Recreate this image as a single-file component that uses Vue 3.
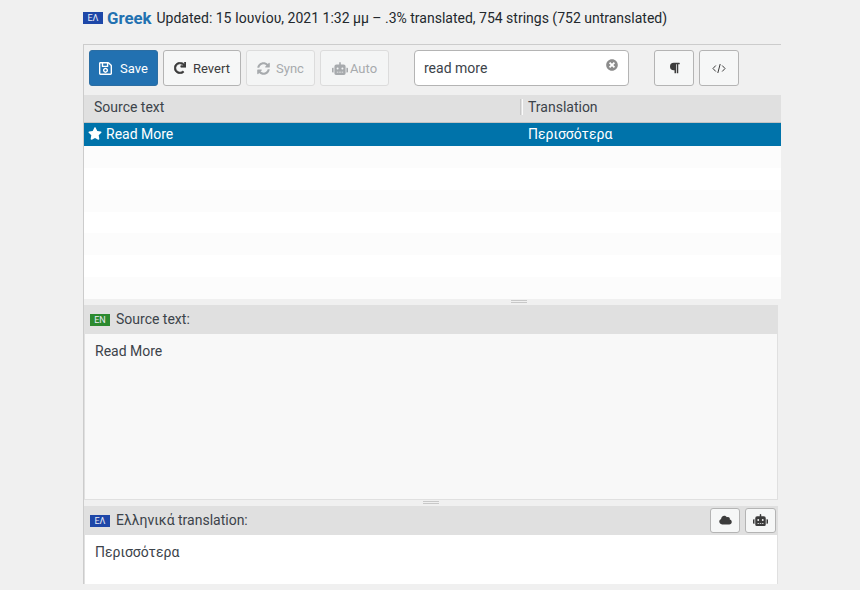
<script setup>
const rows = [0, 1, 2, 3, 4, 5, 6]
</script>

<template>
  <div class="page">
    <div class="title">
      <span class="flag greek">ΕΛ</span>
      <strong class="lang">Greek</strong>
      <span>Updated: 15 Ιουνίου, 2021 1:32 μμ – .3% translated, 754 strings (752 untranslated)</span>
    </div>

    <div class="main">
      <div class="panel">
        <div class="toolbar">
          <button class="btn primary save">
            <svg viewBox="0 0 448 512" width="13" height="15"><path fill="currentColor" d="M433.900 129.900l-83.900-83.900A48 48 0 0 0 316.100 32H48C21.500 32 0 53.500 0 80v352c0 26.500 21.500 48 48 48h352c26.500 0 48-21.500 48-48V163.900a48 48 0 0 0-14.100-34zM272 80v80H144V80h128zm122 352H54a6 6 0 0 1-6-6V86a6 6 0 0 1 6-6h42v104c0 13.300 10.700 24 24 24h176c13.300 0 24-10.700 24-24V83.900l78.200 78.200a6 6 0 0 1 1.800 4.200V426a6 6 0 0 1-6 6zM224 232c-48.500 0-88 39.500-88 88s39.500 88 88 88 88-39.500 88-88-39.500-88-88-88zm0 128c-22.100 0-40-17.900-40-40s17.900-40 40-40 40 17.900 40 40-17.900 40-40 40z"/></svg>
            <span>Save</span>
          </button>
          <button class="btn revert">
            <svg viewBox="0 0 512 512" width="12" height="12"><path fill="currentColor" d="M500.300 0h-47.400a12 12 0 0 0-12 12.600l4 82.800A247.400 247.400 0 0 0 256 8C119.300 8 7.900 119.500 8 256.200 8.100 393.100 119.100 504 256 504a247.100 247.100 0 0 0 166.200-63.900 12 12 0 0 0 .5-17.400l-34-34a12 12 0 0 0-16.400-.6A176 176 0 1 1 402.100 157.800l-101.500-4.900a12 12 0 0 0-12.600 12v47.400a12 12 0 0 0 12 12h200.300a12 12 0 0 0 12-12V12a12 12 0 0 0-12-12z" stroke="currentColor" stroke-width="24"/></svg>
            <span>Revert</span>
          </button>
          <button class="btn muted sync">
            <svg viewBox="0 0 512 512" width="13" height="13"><path fill="currentColor" d="M370.720 133.280C339.458 104.008 298.888 87.962 255.848 88c-77.458.068-144.328 53.178-162.791 126.850-1.344 5.363-6.122 9.150-11.651 9.150H24.103c-7.498 0-13.194-6.807-11.807-14.176C33.933 94.924 134.813 8 256 8c66.448 0 126.791 26.136 171.315 68.685L463.030 40.970C478.149 25.851 504 36.559 504 57.941V192c0 13.255-10.745 24-24 24H345.941c-21.382 0-32.090-25.851-16.971-40.971l41.750-41.749zM32 296h134.059c21.382 0 32.090 25.851 16.971 40.971l-41.750 41.750c31.262 29.273 71.835 45.319 114.876 45.280 77.418-.07 144.315-53.144 162.787-126.849 1.344-5.363 6.122-9.150 11.651-9.150h57.304c7.498 0 13.194 6.807 11.807 14.176C478.067 417.076 377.187 504 256 504c-66.448 0-126.791-26.136-171.315-68.685L48.970 471.030C33.851 486.149 8 475.441 8 454.059V320c0-13.255 10.745-24 24-24z"/></svg>
            <span>Sync</span>
          </button>
          <button class="btn muted auto">
            <svg viewBox="0 0 640 512" width="16" height="13"><path fill="currentColor" d="M32 224h32v192H32a32 32 0 0 1-32-32V256a32 32 0 0 1 32-32zm512-48v272a64 64 0 0 1-64 64H160a64 64 0 0 1-64-64V176a80 80 0 0 1 80-80h112V32a32 32 0 0 1 64 0v64h112a80 80 0 0 1 80 80zM264 256a40 40 0 1 0-40 40 40 40 0 0 0 40-40zm-8 128h-64v32h64zm96 0h-64v32h64zm104-128a40 40 0 1 0-40 40 40 40 0 0 0 40-40zm-8 128h-64v32h64zm192-128v128a32 32 0 0 1-32 32h-32V224h32a32 32 0 0 1 32 32z"/></svg>
            <span>Auto</span>
          </button>
          <div class="search">
            <span>read more</span>
            <svg class="clear" viewBox="0 0 512 512" width="12" height="12"><path fill="#8c8c8c" d="M256 8C119 8 8 119 8 256s111 248 248 248 248-111 248-248S393 8 256 8zm121.600 313.100c4.700 4.700 4.700 12.300 0 17L338 377.600c-4.700 4.700-12.300 4.700-17 0L256 312l-65.100 65.600c-4.700 4.700-12.300 4.700-17 0L134.400 338c-4.700-4.700-4.700-12.300 0-17l65.600-65-65.600-65.100c-4.700-4.700-4.700-12.300 0-17l39.600-39.600c4.700-4.700 12.300-4.700 17 0l65 65.700 65.100-65.600c4.700-4.700 12.300-4.700 17 0l39.600 39.600c4.700 4.700 4.700 12.300 0 17L312 256l65.600 65.100z"/></svg>
          </div>
          <button class="btn square para">
            <svg viewBox="0 0 448 512" width="11" height="12"><path fill="currentColor" d="M448 48v32a16 16 0 0 1-16 16h-48v368a16 16 0 0 1-16 16h-32a16 16 0 0 1-16-16V96h-32v368a16 16 0 0 1-16 16h-32a16 16 0 0 1-16-16V352h-32a160 160 0 0 1 0-320h240a16 16 0 0 1 16 16z"/></svg>
          </button>
          <button class="btn square code">
            <svg viewBox="0 0 14 11" width="14" height="11"><path fill="none" stroke="currentColor" stroke-width="1" d="M3.800 2.500L1 5.500l2.800 3M10.200 2.500L13 5.500l-2.800 3M8.200 1L5.800 10"/></svg>
          </button>
        </div>

        <div class="table-head">
          <div class="col first">Source text</div>
          <div class="grip"></div>
          <div class="col">Translation</div>
        </div>
        <div class="row-selected">
          <div class="cell first">
            <svg viewBox="0 0 576 512" width="14" height="13"><path fill="#fff" d="M259.300 17.800L194 150.200 47.900 171.500c-26.200 3.800-36.700 36.100-17.700 54.600l105.700 103-25 145.500c-4.500 26.300 23.200 46 46.400 33.700L288 439.600l130.700 68.700c23.200 12.200 50.900-7.400 46.400-33.700l-25-145.500 105.700-103c19-18.500 8.500-50.800-17.700-54.600L382 150.200 316.700 17.800c-11.700-23.600-45.600-23.900-57.400 0z"/></svg>
            <span>Read More</span>
          </div>
          <div class="cell second">Περισσότερα</div>
        </div>
        <div class="rows">
          <div v-for="r in rows" :key="r" class="blank" :class="{ odd: r % 2 === 0 }"></div>
        </div>
      </div>

      <div class="splitter top-split"><i></i></div>

      <div class="editor">
        <div class="ed-head">
          <span class="flag en">EN</span>
          <span class="ed-label">Source text:</span>
        </div>
        <div class="ed-body source">Read More</div>
        <div class="splitter inner-split"><i></i></div>
        <div class="ed-head">
          <span class="flag greek">ΕΛ</span>
          <span class="ed-label">Ελληνικά translation:</span>
          <div class="ed-actions">
            <button class="btn tiny">
              <svg viewBox="0 0 640 512" width="13" height="10"><path fill="currentColor" d="M537.600 226.600c4.100-10.700 6.400-22.400 6.400-34.600 0-53-43-96-96-96-19.700 0-38.100 6-53.300 16.200C367 64.200 315.300 32 256 32c-88.400 0-160 71.600-160 160 0 2.700.1 5.400.2 8.100C40.200 219.800 0 273.200 0 336c0 79.500 64.500 144 144 144h368c70.700 0 128-57.300 128-128 0-61.900-44-113.600-102.400-125.400z"/></svg>
            </button>
            <button class="btn tiny wide">
              <svg viewBox="0 0 640 512" width="15" height="12"><path fill="currentColor" d="M32 224h32v192H32a32 32 0 0 1-32-32V256a32 32 0 0 1 32-32zm512-48v272a64 64 0 0 1-64 64H160a64 64 0 0 1-64-64V176a80 80 0 0 1 80-80h112V32a32 32 0 0 1 64 0v64h112a80 80 0 0 1 80 80zM264 256a40 40 0 1 0-40 40 40 40 0 0 0 40-40zm-8 128h-64v32h64zm96 0h-64v32h64zm104-128a40 40 0 1 0-40 40 40 40 0 0 0 40-40zm-8 128h-64v32h64zm192-128v128a32 32 0 0 1-32 32h-32V224h32a32 32 0 0 1 32 32z"/></svg>
            </button>
          </div>
        </div>
        <div class="ed-body target">Περισσότερα</div>
      </div>
    </div>
  </div>
</template>

<style>
html, body { margin: 0; background: #f0f0f0; }
</style>

<style scoped>
.page {
  width: 860px;
  height: 590px;
  overflow: hidden;
  box-sizing: border-box;
  padding: 0 0 0 83px;
  background: #f0f0f0;
  font-family: Roboto, "Noto Sans", sans-serif;
  font-size: 14px;
  color: #3c434a;
}
.title {
  height: 18px;
  margin: 0;
  padding: 9px 0 17px;
  display: flex;
  align-items: center;
  gap: 4px;
  line-height: 18px;
  color: #23282d;
}
.flag {
  width: 20px;
  height: 12px;
  display: inline-flex;
  align-items: center;
  justify-content: center;
  font-size: 9px;
  line-height: 12px;
  color: #e8ecf5;
  flex: none;
}
.greek { background: #1e47a8; }
.en { background: #2c8a2f; }
.lang {
  font-size: 16.8px;
  font-weight: 700;
  color: #2271b1;
  margin-right: 1px;
}
.main {
  width: 698px;
  box-sizing: border-box;
  border-left: 1px solid #ccc;
}
.panel {
  width: 697px;
  border-top: 1px solid #ccc;
}
.toolbar {
  height: 50px;
  box-sizing: border-box;
  padding: 5px 0 0 5px;
  display: flex;
  align-items: flex-start;
  gap: 5px;
}
.btn {
  height: 36px;
  box-sizing: border-box;
  border: 1px solid #b4b4b4;
  border-radius: 3px;
  background: #f6f7f7;
  color: #3c3c3c;
  font: inherit;
  font-size: 13px;
  padding: 0;
  display: inline-flex;
  align-items: center;
  justify-content: center;
  flex: none;
}
.primary { background: #2271b1; border-color: #2c6ea3; color: #fff; gap: 8px; }
.save { width: 69px; }
.revert { width: 78px; gap: 7px; }
.muted { background: #f4f5f5; border-color: #dcdcdc; color: #a7aaad; }
.sync { width: 69px; gap: 6px; }
.auto { width: 69px; gap: 2px; }
.search {
  width: 215px;
  height: 36px;
  box-sizing: border-box;
  margin-left: 20px;
  padding: 0 10px 0 9px;
  border: 1px solid #b4b4b4;
  border-radius: 4px;
  background: #fff;
  display: flex;
  align-items: center;
  justify-content: space-between;
  color: #3c434a;
}
.clear { margin: -6px 0 0; }
.square { width: 40px; }
.para { margin-left: 20px; }
.table-head {
  height: 28px;
  box-sizing: border-box;
  padding-bottom: 3px;
  background: #e0e0e0;
  border-bottom: 1px solid #c4c4c4;
  display: flex;
  align-items: center;
  color: #3c434a;
}
.col.first { width: 436px; padding-left: 10px; box-sizing: border-box; }
.grip {
  width: 3px;
  height: 16px;
  margin-right: 5px;
  border-left: 1px solid #c8c8c8;
  border-right: 1px solid #fafafa;
  box-sizing: border-box;
}
.row-selected {
  height: 23px;
  padding-bottom: 1px;
  box-sizing: border-box;
  background: #0073aa;
  color: #fff;
  display: flex;
  align-items: center;
}
.cell.first {
  width: 444px;
  box-sizing: border-box;
  padding-left: 4px;
  display: flex;
  align-items: center;
  gap: 4px;
}
.cell.first svg { margin-top: -2px; }
.rows {
  background: #fff;
  display: grid;
  grid-template-rows: repeat(7, 1fr);
  height: 153px;
}
.odd { background: #fcfcfc; }
.splitter {
  display: flex;
  justify-content: center;
  align-items: flex-start;
}
.splitter i {
  display: block;
  width: 16px;
  height: 1px;
  margin-top: 1px;
  border-top: 1px solid #c8c8c8;
  border-bottom: 1px solid #c8c8c8;
}
.top-split {
  height: 6px;
  justify-content: flex-start;
  padding-left: 427px;
}
.editor {
  width: 694px;
}
.ed-head {
  height: 29px;
  box-sizing: border-box;
  padding-bottom: 1px;
  background: #e0e0e0;
  display: flex;
  align-items: center;
  padding-left: 6px;
  gap: 6px;
}
.flag.en, .ed-head .greek { margin-top: 2px; }
.ed-label { color: #3c434a; }
.ed-body {
  box-sizing: border-box;
  padding: 9px 10px;
  line-height: 16px;
  color: #3c434a;
}
.source {
  height: 166px;
  background: #f8f8f8;
  border: 1px solid #e0e0e0;
  border-top: none;
}
.inner-split { height: 6px; }
.ed-actions {
  margin-left: auto;
  display: flex;
  gap: 5px;
  padding-right: 2px;
}
.tiny { width: 30px; height: 25px; }
.tiny.wide { width: 31px; }
.target {
  height: 49px;
  background: #fff;
  border-left: 1px solid #e0e0e0;
  border-right: 1px solid #e0e0e0;
}
</style>
